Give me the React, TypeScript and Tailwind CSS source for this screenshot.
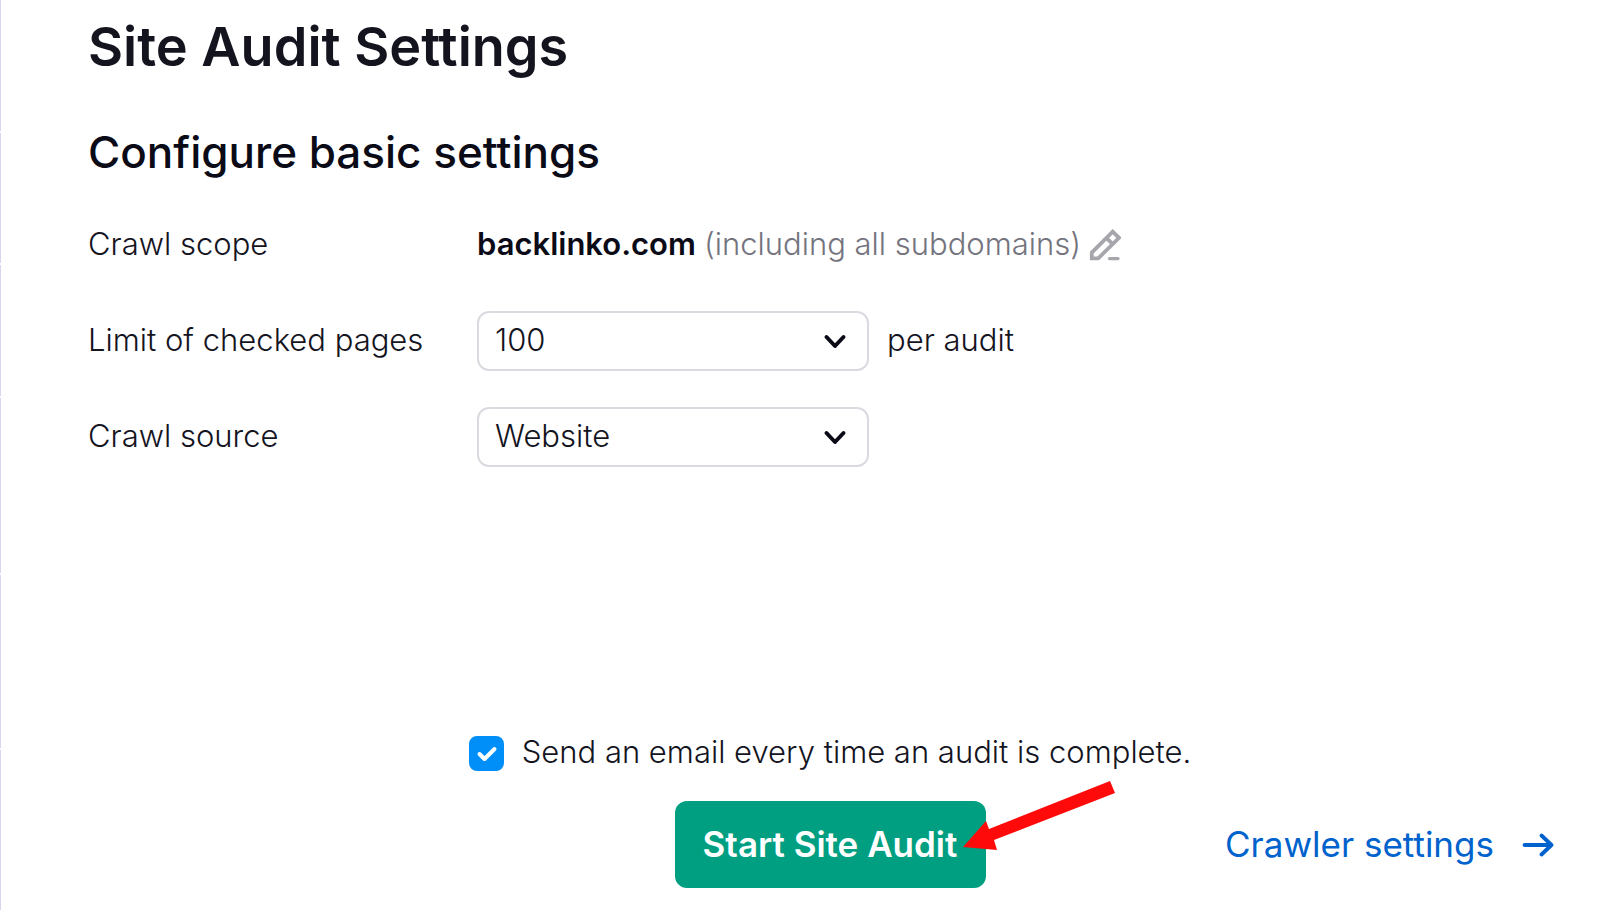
import { useState } from "react";
import type { ReactNode } from "react";

function Chevron() {
  return (
    <svg viewBox="0 0 24 16" className="pointer-events-none absolute top-1/2 right-[22px] h-4 w-6 -translate-y-1/2" fill="none" stroke="#0b0b18" strokeWidth="4" strokeLinecap="round" strokeLinejoin="round" aria-hidden="true">
      <path d="M3.5 4 12 13 20.5 4" />
    </svg>
  );
}

function SelectBox({ id, options }: { id: string; options: string[] }) {
  return (
    <div className="relative w-[392px]">
      <select id={id} className="h-[60px] w-full appearance-none rounded-xl border-2 border-[#dadae0] bg-white pr-14 pb-0.5 pl-4 font-light">
        {options.map((o) => (
          <option key={o}>{o}</option>
        ))}
      </select>
      <Chevron />
    </div>
  );
}

function Row({ label, htmlFor, children }: { label: string; htmlFor?: string; children: ReactNode }) {
  return (
    <div className="flex h-[60px] items-center">
      {htmlFor ? (
        <label htmlFor={htmlFor} className="w-[389px] shrink-0 pb-0.5">{label}</label>
      ) : (
        <span className="w-[389px] shrink-0 pb-0.5">{label}</span>
      )}
      {children}
    </div>
  );
}

export default function App() {
  const [notify, setNotify] = useState(true);
  return (
    <div className="flex min-h-screen bg-white font-['Inter','Liberation_Sans',sans-serif] text-[31px] leading-10 font-light text-[#14141f]">
      <div className="flex w-px shrink-0 flex-col gap-0.5" aria-hidden="true">
        <div className="h-[131px] bg-[#d8d6ee]" />
        <div className="h-[130px] bg-[#d8d6ee]" />
        <div className="h-[131px] bg-[#d8d6ee]" />
        <div className="h-[175px] bg-[#d8d6ee]" />
        <div className="h-[173px] bg-[#d8d6ee]" />
        <div className="grow bg-[#d8d6ee]" />
      </div>
      <main className="flex grow flex-col pt-[15px] pr-7 pb-[22px] pl-[87px]">
        <h1 className="text-[54px] leading-[64px] font-semibold">Site Audit Settings</h1>
        <h2 className="mt-[47px] text-[44px] leading-[52px] font-medium text-[#0b0b18]">Configure basic settings</h2>

        <section className="mt-[37px] flex flex-col gap-9">
          <Row label="Crawl scope">
            <b className="pb-0.5 font-semibold text-[#0b0b18]">backlinko.com</b>
            <span className="ml-2 pb-0.5 text-[#74747e]">(including all subdomains)</span>
            <button type="button" aria-label="Edit crawl scope" className="ml-2">
              <svg viewBox="0 0 32 34" className="h-[34px] w-8" fill="none" stroke="#a6a6ac" strokeWidth="3.8" aria-hidden="true">
                <path d="M2.8 30.4V24.6L23.7 3.6 30 9.8 9.2 30.4Z" />
                <path d="M17.3 9.8 23.8 16.2" />
                <path d="M20.5 30.6H29" strokeWidth="3.2" strokeLinecap="round" />
              </svg>
            </button>
          </Row>
          <Row label="Limit of checked pages" htmlFor="limit">
            <SelectBox id="limit" options={["100", "500", "1,000"]} />
            <span className="ml-[18px] pb-0.5">per audit</span>
          </Row>
          <Row label="Crawl source" htmlFor="source">
            <SelectBox id="source" options={["Website", "Sitemap"]} />
          </Row>
        </section>

        <footer className="mt-auto flex flex-col gap-[27px]">
          <label className="flex items-center gap-[18px] self-center">
            <span className="relative flex size-[35px]">
              <input type="checkbox" checked={notify} onChange={(e) => setNotify(e.target.checked)} className="size-full appearance-none rounded-lg border-2 border-[#008ff8] checked:bg-[#008ff8]" />
              {notify && (
                <svg viewBox="0 0 35 35" className="pointer-events-none absolute inset-0" fill="none" stroke="#ffffff" strokeWidth="4" strokeLinecap="round" strokeLinejoin="round" aria-hidden="true">
                  <path d="M10.5 18 15.5 23 25.5 13" />
                </svg>
              )}
            </span>
            <span className="pb-0.5">Send an email every time an audit is complete.</span>
          </label>
          <div className="grid grid-cols-[1fr_auto_1fr] items-center">
            <div className="relative col-start-2">
              <button type="button" className="h-[87px] w-[311px] rounded-xl bg-[#009f81] pb-0.5 text-[35px] font-semibold text-white">Start Site Audit</button>
              <svg viewBox="0 0 152 70" className="pointer-events-none absolute -top-5 left-[288px] h-[70px] w-[152px]" aria-hidden="true">
                <path d="M0 66 23 40 26 48 147 0 152 12 31 59 34 69Z" fill="#ff0a0a" />
              </svg>
            </div>
            <a href="#crawler" className="mr-[18px] flex items-center gap-7 justify-self-end text-[35px] font-normal text-[#0062cc]">
              <span className="pb-0.5">Crawler settings</span>
              <svg viewBox="0 0 32 24" className="h-6 w-8" fill="none" stroke="currentColor" strokeWidth="3.8" strokeLinecap="round" strokeLinejoin="round" aria-hidden="true">
                <path d="M2.5 12H29M19.5 2.5 29.5 12 19.5 21.5" />
              </svg>
            </a>
          </div>
        </footer>
      </main>
    </div>
  );
}
